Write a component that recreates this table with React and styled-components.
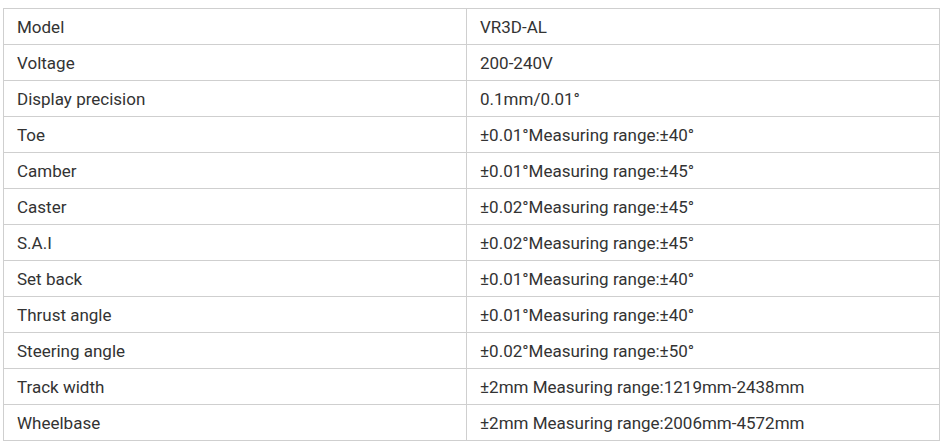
import styled, { createGlobalStyle } from "styled-components";

const Global = createGlobalStyle`
  body {
    margin: 0;
    background: #fff;
    font-family: Roboto, "Liberation Sans", sans-serif;
  }
`;

const Wrap = styled.div`
  padding: 8px 0 0 3px;
`;

const Table = styled.table`
  border-collapse: collapse;
  width: 937px;
  table-layout: fixed;
  color: #333;
  font-size: 17px;
`;

const Cell = styled.td`
  border: 1px solid #cfcfcf;
  height: 36px;
  padding: 0 0 0 13px;
  width: ${(p) => (p.$first ? "463px" : "auto")};
  vertical-align: middle;
  box-sizing: border-box;
`;

const rows = [
  ["Model", "VR3D-AL"],
  ["Voltage", "200-240V"],
  ["Display precision", "0.1mm/0.01°"],
  ["Toe", "±0.01°Measuring range:±40°"],
  ["Camber", "±0.01°Measuring range:±45°"],
  ["Caster", "±0.02°Measuring range:±45°"],
  ["S.A.I", "±0.02°Measuring range:±45°"],
  ["Set back", "±0.01°Measuring range:±40°"],
  ["Thrust angle", "±0.01°Measuring range:±40°"],
  ["Steering angle", "±0.02°Measuring range:±50°"],
  ["Track width", "±2mm Measuring range:1219mm-2438mm"],
  ["Wheelbase", "±2mm Measuring range:2006mm-4572mm"],
];

function App() {
  return (
    <Wrap>
      <Global />
      <Table>
        <tbody>
          {rows.map(([k, v]) => (
            <tr key={k}>
              <Cell $first>{k}</Cell>
              <Cell>{v}</Cell>
            </tr>
          ))}
        </tbody>
      </Table>
    </Wrap>
  );
}

export default App;
